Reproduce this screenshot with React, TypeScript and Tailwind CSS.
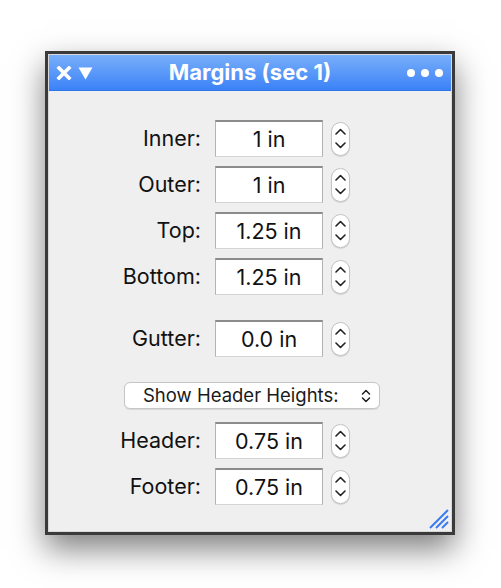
import React from "react";

const font = { fontFamily: "Inter, 'Liberation Sans', sans-serif" };

function Stepper() {
  return (
    <div className="flex h-[34px] w-[19px] flex-col items-center justify-center gap-[7px] rounded-[10px] border border-[#c4c4c4] bg-white shadow-[0_1px_1px_rgba(0,0,0,0.12)]">
      <svg width="11" height="7" viewBox="0 0 11 7" fill="none">
        <path d="M1 6 L5.5 1.5 L10 6" stroke="#222" strokeWidth="1.6" strokeLinecap="round" strokeLinejoin="round" />
      </svg>
      <svg width="11" height="7" viewBox="0 0 11 7" fill="none">
        <path d="M1 1 L5.5 5.5 L10 1" stroke="#222" strokeWidth="1.6" strokeLinecap="round" strokeLinejoin="round" />
      </svg>
    </div>
  );
}

function Field({ label, value }: { label: string; value: string }) {
  return (
    <div className="flex h-[37px] items-center">
      <div className="w-[153px] pr-[1px] text-right text-[21.5px] text-[#111]">{label}</div>
      <div className="ml-[13px] flex h-[37px] w-[108px] items-center justify-center border-x border-b border-t-2 border-x-[#b3b3b3] border-b-[#d4d4d4] border-t-[#8c8c8c] bg-white pt-[1px] text-[21.5px] text-[#111]">
        {value}
      </div>
      <div className="ml-[8px]">
        <Stepper />
      </div>
    </div>
  );
}

export default function App() {
  return (
    <div className="min-h-[588px] bg-white pl-[45px] pt-[51px]" style={font}>
      <div className="flex h-[484px] w-[410px] flex-col border-[3px] border-[#3a3a3a] shadow-[0_14px_30px_rgba(0,0,0,0.5)]">
        <div className="flex flex-1 flex-col border border-[#d9d9d9]">
          <div className="relative flex h-[36px] items-center justify-center border-b border-[#2f74ee] bg-gradient-to-b from-[#78aefa] to-[#3b82f7]">
            <div className="absolute left-[7px] top-[11px] flex items-center gap-[6px]">
              <svg width="16" height="14" viewBox="0 0 16 14">
                <path d="M3 2 L13 12 M13 2 L3 12" stroke="white" strokeWidth="3.6" strokeLinecap="square" />
              </svg>
              <svg width="15" height="13" viewBox="0 0 15 13">
                <path d="M0.5 0.5 H14.5 L7.5 12.5 Z" fill="white" />
              </svg>
            </div>
            <span className="text-[22px] font-bold text-white">Margins (sec 1)</span>
            <div className="absolute right-[8px] top-[14px] flex gap-[6px]">
              <div className="h-[8px] w-[8px] rounded-full bg-white" />
              <div className="h-[8px] w-[8px] rounded-full bg-white" />
              <div className="h-[8px] w-[8px] rounded-full bg-white" />
            </div>
          </div>
          <div className="relative flex flex-1 flex-col bg-[#efefef] pt-[29px]">
            <div className="flex flex-col gap-[9px]">
              <Field label="Inner:" value="1 in" />
              <Field label="Outer:" value="1 in" />
              <Field label="Top:" value="1.25 in" />
              <Field label="Bottom:" value="1.25 in" />
            </div>
            <div className="mt-[25px]">
              <Field label="Gutter:" value="0.0 in" />
            </div>
            <div className="ml-[75px] mt-[25px] flex h-[27px] w-[256px] items-center justify-between rounded-[6px] border border-[#c6c6c6] bg-white pl-[18px] pr-[8px] text-[18.5px] text-[#1a1a1a] shadow-[0_1px_1px_rgba(0,0,0,0.1)]">
              <span>Show Header Heights:</span>
              <svg width="10" height="16" viewBox="0 0 10 16" fill="none">
                <path d="M1.5 6 L5 2.5 L8.5 6 M1.5 10 L5 13.5 L8.5 10" stroke="#222" strokeWidth="1.5" strokeLinecap="round" strokeLinejoin="round" />
              </svg>
            </div>
            <div className="mt-[13px] flex flex-col gap-[9px]">
              <Field label="Header:" value="0.75 in" />
              <Field label="Footer:" value="0.75 in" />
            </div>
            <svg className="absolute bottom-[2px] right-[2px]" width="20" height="20" viewBox="0 0 20 20">
              <path d="M1 19 L19 1 M7 19 L19 7 M13 19 L19 13" stroke="#3a7bf0" strokeWidth="2" />
            </svg>
          </div>
        </div>
      </div>
    </div>
  );
}
